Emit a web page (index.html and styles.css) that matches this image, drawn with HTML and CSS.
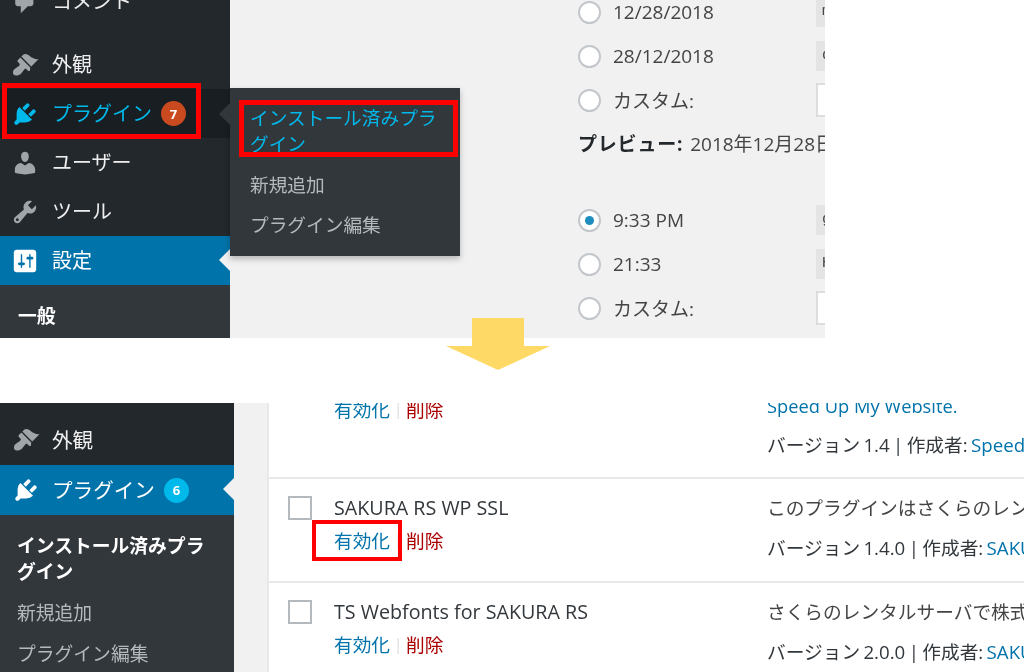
FILE: index.html
```html
<!DOCTYPE html>
<html lang="ja">
<head>
<meta charset="utf-8">
<title>プラグイン</title>
<link rel="stylesheet" href="styles.css">
</head>
<body>
<svg width="0" height="0" class="defs">
  <symbol id="i-comment" viewBox="0 0 20 20"><path d="M5 2h9c1.1 0 2 .9 2 2v7c0 1.1-.9 2-2 2h-2l-5 5v-5H5c-1.1 0-2-.9-2-2V4c0-1.1.9-2 2-2z"/></symbol>
  <symbol id="i-brush" viewBox="0 0 20 20"><path d="M14.48 11.06L7.41 3.99l1.5-1.5c.5-.56 2.3-.47 3.51.32 1.21.8 1.43 1.28 2.91 2.1 1.18.64 2.45 1.26 4.45.85zm-.71.71L6.7 4.7 4.93 6.47c-.39.39-.39 1.02 0 1.41l1.06 1.06c.39.39.39 1.03 0 1.42-.6.6-1.43 1.11-2.21 1.69-.35.26-.7.53-1.01.84C1.43 13.23.91 15.95 1.98 17s3.79.57 5.12-.76c.31-.31.58-.66.85-1.02.57-.78 1.08-1.61 1.69-2.21.39-.39 1.02-.39 1.41 0l1.06 1.06c.39.39 1.02.39 1.41 0z"/></symbol>
  <symbol id="i-plug" viewBox="0 0 20 20"><path d="M13.11 4.36L9.87 7.6 8 5.73l3.24-3.24c.35-.34 1.05-.2 1.56.32.52.51.66 1.21.31 1.55zm-8 1.77l.91-1.12 9.01 9.01-1.19.84c-.71.71-2.63 1.16-3.82 1.16H6.14L4.9 17.26c-.59.59-1.54.59-2.12 0-.59-.58-.59-1.53 0-2.12l1.24-1.24v-3.88c0-1.13.4-3.19 1.09-3.89zm7.26 3.97l3.24-3.24c.34-.35 1.04-.21 1.55.31.52.51.66 1.21.31 1.55l-3.24 3.25z"/></symbol>
  <symbol id="i-user" viewBox="0 0 20 20"><path d="M10 9.25c-2.27 0-2.73-3.44-2.73-3.44C7 4.02 7.82 2 9.97 2c2.16 0 2.98 2.02 2.71 3.81 0 0-.41 3.44-2.68 3.44zm0 2.57L12.72 10c2.39 0 4.52 2.33 4.52 4.53v2.49s-3.65 1.13-7.24 1.13c-3.65 0-7.24-1.13-7.24-1.13v-2.49c0-2.25 1.94-4.48 4.47-4.48z"/></symbol>
  <symbol id="i-tool" viewBox="0 0 20 20"><path d="M16.68 9.77c-1.34 1.34-3.3 1.67-4.95.99l-5.41 6.52c-.99.99-2.59.99-3.58 0s-.99-2.59 0-3.57l6.52-5.42c-.68-1.65-.35-3.61.99-4.95 1.28-1.28 3.12-1.62 4.72-1.06l-2.89 2.89 2.82 2.82 2.86-2.87c.53 1.58.18 3.39-1.08 4.65zM3.81 16.21c.4.39 1.04.39 1.43 0 .4-.4.4-1.04 0-1.43-.39-.4-1.03-.4-1.43 0-.39.39-.39 1.03 0 1.43z"/></symbol>
  <symbol id="i-settings" viewBox="0 0 20 20"><path d="M18 16V4c0-1.1-.9-2-2-2H4c-1.1 0-2 .9-2 2v12c0 1.1.9 2 2 2h12c1.1 0 2-.9 2-2zM8 11h1c.55 0 1 .45 1 1s-.45 1-1 1H8v1.5c0 .28-.22.5-.5.5s-.5-.22-.5-.5V13H6c-.55 0-1-.45-1-1s.45-1 1-1h1V5.5c0-.28.22-.5.5-.5s.5.22.5.5V11zm5-2h-1c-.55 0-1-.45-1-1s.45-1 1-1h1V5.5c0-.28.22-.5.5-.5s.5.22.5.5V7h1c.55 0 1 .45 1 1s-.45 1-1 1h-1v5.5c0 .28-.22.5-.5.5s-.5-.22-.5-.5V9z"/></symbol>
</svg>

<div class="page">
  <section class="shot shot-top">
    <nav class="side side-top">
      <div class="mi mi-first"><svg class="ic"><use href="#i-comment"/></svg><span>コメント</span></div>
      <div class="mi"><svg class="ic"><use href="#i-brush"/></svg><span>外観</span></div>
      <div class="mi mi-hover">
        <svg class="ic"><use href="#i-plug"/></svg><span>プラグイン</span><b class="badge badge-orange">7</b>
        <div class="flyout">
          <a class="fly-on">インストール済みプラグイン</a>
          <a>新規追加</a>
          <a>プラグイン編集</a>
        </div>
      </div>
      <div class="mi"><svg class="ic"><use href="#i-user"/></svg><span>ユーザー</span></div>
      <div class="mi"><svg class="ic"><use href="#i-tool"/></svg><span>ツール</span></div>
      <div class="mi mi-active"><svg class="ic"><use href="#i-settings"/></svg><span>設定</span></div>
      <div class="sub sub-top"><a class="sub-on">一般</a></div>
    </nav>
    <main class="settings">
      <div class="opt"><div class="opt-l"><i class="radio"></i>12/28/2018</div><code class="code">m/d/Y</code></div>
      <div class="opt"><div class="opt-l"><i class="radio"></i>28/12/2018</div><code class="code">d/m/Y</code></div>
      <div class="opt"><div class="opt-l"><i class="radio"></i>カスタム:</div><span class="field"></span></div>
      <p class="preview"><strong>プレビュー:</strong> 2018年12月28日</p>
      <div class="opt"><div class="opt-l"><i class="radio radio-on"></i>9:33 PM</div><code class="code">g:i A</code></div>
      <div class="opt"><div class="opt-l"><i class="radio"></i>21:33</div><code class="code">H:i</code></div>
      <div class="opt"><div class="opt-l"><i class="radio"></i>カスタム:</div><span class="field"></span></div>
    </main>
    <div class="mark mark-a"></div>
    <div class="mark mark-b"></div>
  </section>

  <svg class="arrow" viewBox="0 0 104 52" width="104" height="52"><path d="M26 0h52v28h26L52 52 0 28h26z"/></svg>

  <section class="shot shot-bottom">
    <nav class="side side-bottom">
      <div class="mi"><svg class="ic"><use href="#i-brush"/></svg><span>外観</span></div>
      <div class="mi mi-active"><svg class="ic"><use href="#i-plug"/></svg><span>プラグイン</span><b class="badge badge-blue">6</b></div>
      <div class="sub sub-bottom">
        <a class="sub-on">インストール済みプラグイン</a>
        <a>新規追加</a>
        <a>プラグイン編集</a>
      </div>
    </nav>
    <div class="gutter"></div>
    <div class="table">
      <div class="row row-cut">
        <div class="cell-main"><div class="actions"><a class="on">有効化</a><s>|</s><a class="del">削除</a></div></div>
        <div class="cell-desc">
          <a class="on desc-link">Speed Up My Website.</a>
          <div class="meta">バージョン 1.4 | 作成者: <a class="on">Speed Up</a></div>
        </div>
      </div>
      <div class="row">
        <i class="check"></i>
        <div class="cell-main"><div class="name">SAKURA RS WP SSL</div><div class="actions"><a class="on">有効化</a><s>|</s><a class="del">削除</a></div></div>
        <div class="cell-desc"><div class="desc">このプラグインはさくらのレンタルサーバ</div><div class="meta">バージョン 1.4.0 | 作成者: <a class="on">SAKURA Internet</a></div></div>
      </div>
      <div class="row">
        <i class="check"></i>
        <div class="cell-main"><div class="name">TS Webfonts for SAKURA RS</div><div class="actions"><a class="on">有効化</a><s>|</s><a class="del">削除</a></div></div>
        <div class="cell-desc"><div class="desc">さくらのレンタルサーバで株式会社</div><div class="meta">バージョン 2.0.0 | 作成者: <a class="on">SAKURA Internet</a></div></div>
      </div>
    </div>
    <div class="mark mark-c"></div>
  </section>
</div>
</body>
</html>
```
FILE: styles.css
```css
* { box-sizing: border-box; }
html, body { margin: 0; height: 672px; overflow: hidden; background: #fff; }
body { font-family: "Open Sans", "Noto Sans CJK JP", sans-serif; color: #444; }
.defs { display: block; height: 0; }
.page { position: relative; height: 672px; }
a { text-decoration: none; color: inherit; }

.shot { position: relative; overflow: hidden; display: flex; filter: blur(.4px); }
.shot-top { width: 825px; height: 338px; background: #f1f1f1; }
.shot-bottom { width: 1024px; height: 269px; margin-top: 65px; background: #f1f1f1; }

/* sidebar */
.side { flex: none; background: #23282d; color: #eee; font-size: 20px; }
.side-top { width: 230px; }
.side-bottom { width: 234px; padding-top: 12px; font-size: 20.6px; }
.mi { position: relative; display: flex; align-items: center; height: 49px; padding-left: 11px; white-space: nowrap; }
.mi span { margin-left: 13px; line-height: 49px; }
.mi-first { margin-top: -23px; margin-bottom: 14px; }
.ic { flex: none; width: 28px; height: 28px; fill: #a0a5aa; }
.mi-hover { background: #191e23; color: #00b9eb; z-index: 2; }
.mi-hover .ic { fill: #00b9eb; }
.mi-hover::after { content: ""; position: absolute; right: 0; top: 14px; border: 11px solid transparent; border-left: 0; border-right-color: #32373c; }
.mi-active { background: #0073aa; color: #fff; }
.mi-active .ic { fill: #fff; }
.mi-active::after { content: ""; position: absolute; right: 0; top: 13px; border: 11px solid transparent; border-left: 0; border-right-color: #f1f1f1; }
.side-bottom .mi { height: 50px; padding-left: 12px; }
.side-bottom .mi span { margin-left: 12px; }

.badge { display: flex; align-items: center; justify-content: center; width: 25px; height: 25px; margin-left: 9px; border-radius: 50%; color: #fff; font-size: 13px; font-weight: 700; font-family: "Open Sans", sans-serif; }
.badge-orange { background: #ca4a1f; }
.badge-blue { background: #00b9eb; margin-left: 9px; }

/* submenus */
.sub { background: #32373c; font-size: 18.8px; line-height: 26px; color: #b4b9be; }
.sub a { display: block; padding-left: 17px; }
.sub-on { color: #fff; font-weight: 700; }
.sub-top { height: 54px; padding-top: 18px; }
.sub-top a { padding-left: 18px; }
.sub-bottom { padding-top: 18px; height: 200px; }
.sub-bottom a + a { margin-top: 15px; }
.sub-bottom a:first-child { padding-right: 20px; }

.flyout { position: absolute; left: 100%; top: -1px; width: 230px; height: 168px; padding: 17px 14px 0 20px; background: #32373c; color: #b4b9be; font-size: 18.7px; line-height: 26px; white-space: normal; box-shadow: 0 3px 6px rgba(0, 0, 0, .25); }
.flyout a { display: block; margin-bottom: 14px; }
.flyout .fly-on { color: #00b9eb; margin-bottom: 15px; }

/* settings form */
.settings { flex: none; width: 595px; padding-left: 348px; margin-top: -10px; font-size: 19px; }
.opt { display: flex; align-items: center; height: 44px; white-space: nowrap; }
.opt-l { display: flex; align-items: center; flex: none; width: 238px; gap: 12px; }
.radio { flex: none; width: 23px; height: 23px; border: 2px solid #c3c6ca; border-radius: 50%; background: #fff; display: flex; align-items: center; justify-content: center; }
.radio-on::before { content: ""; width: 9px; height: 9px; border-radius: 50%; background: #1e8cbe; }
.code { flex: none; width: 60px; height: 30px; padding: 3px 6px; background: #e4e4e4; font: 15px/24px "Liberation Mono", monospace; }
.field { flex: none; width: 60px; height: 34px; background: #fff; border: 2px solid #ddd; }
.preview { margin: 0 0 32px; height: 44px; line-height: 44px; white-space: nowrap; }
.preview strong { color: #23282d; font-weight: 700; letter-spacing: .8px; margin-right: 2px; }

/* plugin table */
.gutter { flex: none; width: 33px; }
.table { flex: 1; min-width: 0; background: #fff; border-left: 2px solid #e9e9e9; }
.row { display: grid; grid-template-columns: 65px 433px 1fr; height: 104px; border-bottom: 2px solid #e8e8e8; white-space: nowrap; overflow: hidden; font-size: 18.7px; }
.row-cut { height: 76px; }
.row-cut .cell-main { grid-column: 2; padding-top: 0; margin-top: -10px; }
.row-cut .cell-desc { padding-top: 0; margin-top: -14px; }
.row-cut .meta { margin-top: 6px; }
.check { display: block; justify-self: end; margin: 17px 22px 0 0; width: 24px; height: 24px; background: #fff; border: 2px solid #b4b9be; }
.cell-main { padding-top: 12px; }
.name { height: 33px; line-height: 33px; font-size: 19.7px; color: #32373c; }
.actions { display: flex; height: 33px; line-height: 33px; }
.actions s { text-decoration: none; color: #ddd; width: 16px; text-align: center; font-size: 16px; }
.on { color: #0073aa; }
.del { color: #a00; }
.cell-desc { padding-top: 12px; }
.desc { height: 33px; line-height: 33px; }
.desc-link { display: block; height: 33px; line-height: 33px; font-size: 18.3px; }
.meta { margin-top: 7px; height: 33px; line-height: 33px; color: #32373c; word-spacing: -1.5px; }

/* annotations */
.mark { position: absolute; border: 5px solid #f00; z-index: 5; }
.mark-a { left: 2px; top: 83px; width: 199px; height: 56px; }
.mark-b { left: 239px; top: 100px; width: 219px; height: 57px; }
.mark-c { left: 312px; top: 117px; width: 90px; height: 41px; border-width: 4px; }
.arrow { position: absolute; left: 446px; top: 318px; fill: #ffd966; z-index: 6; }
```
